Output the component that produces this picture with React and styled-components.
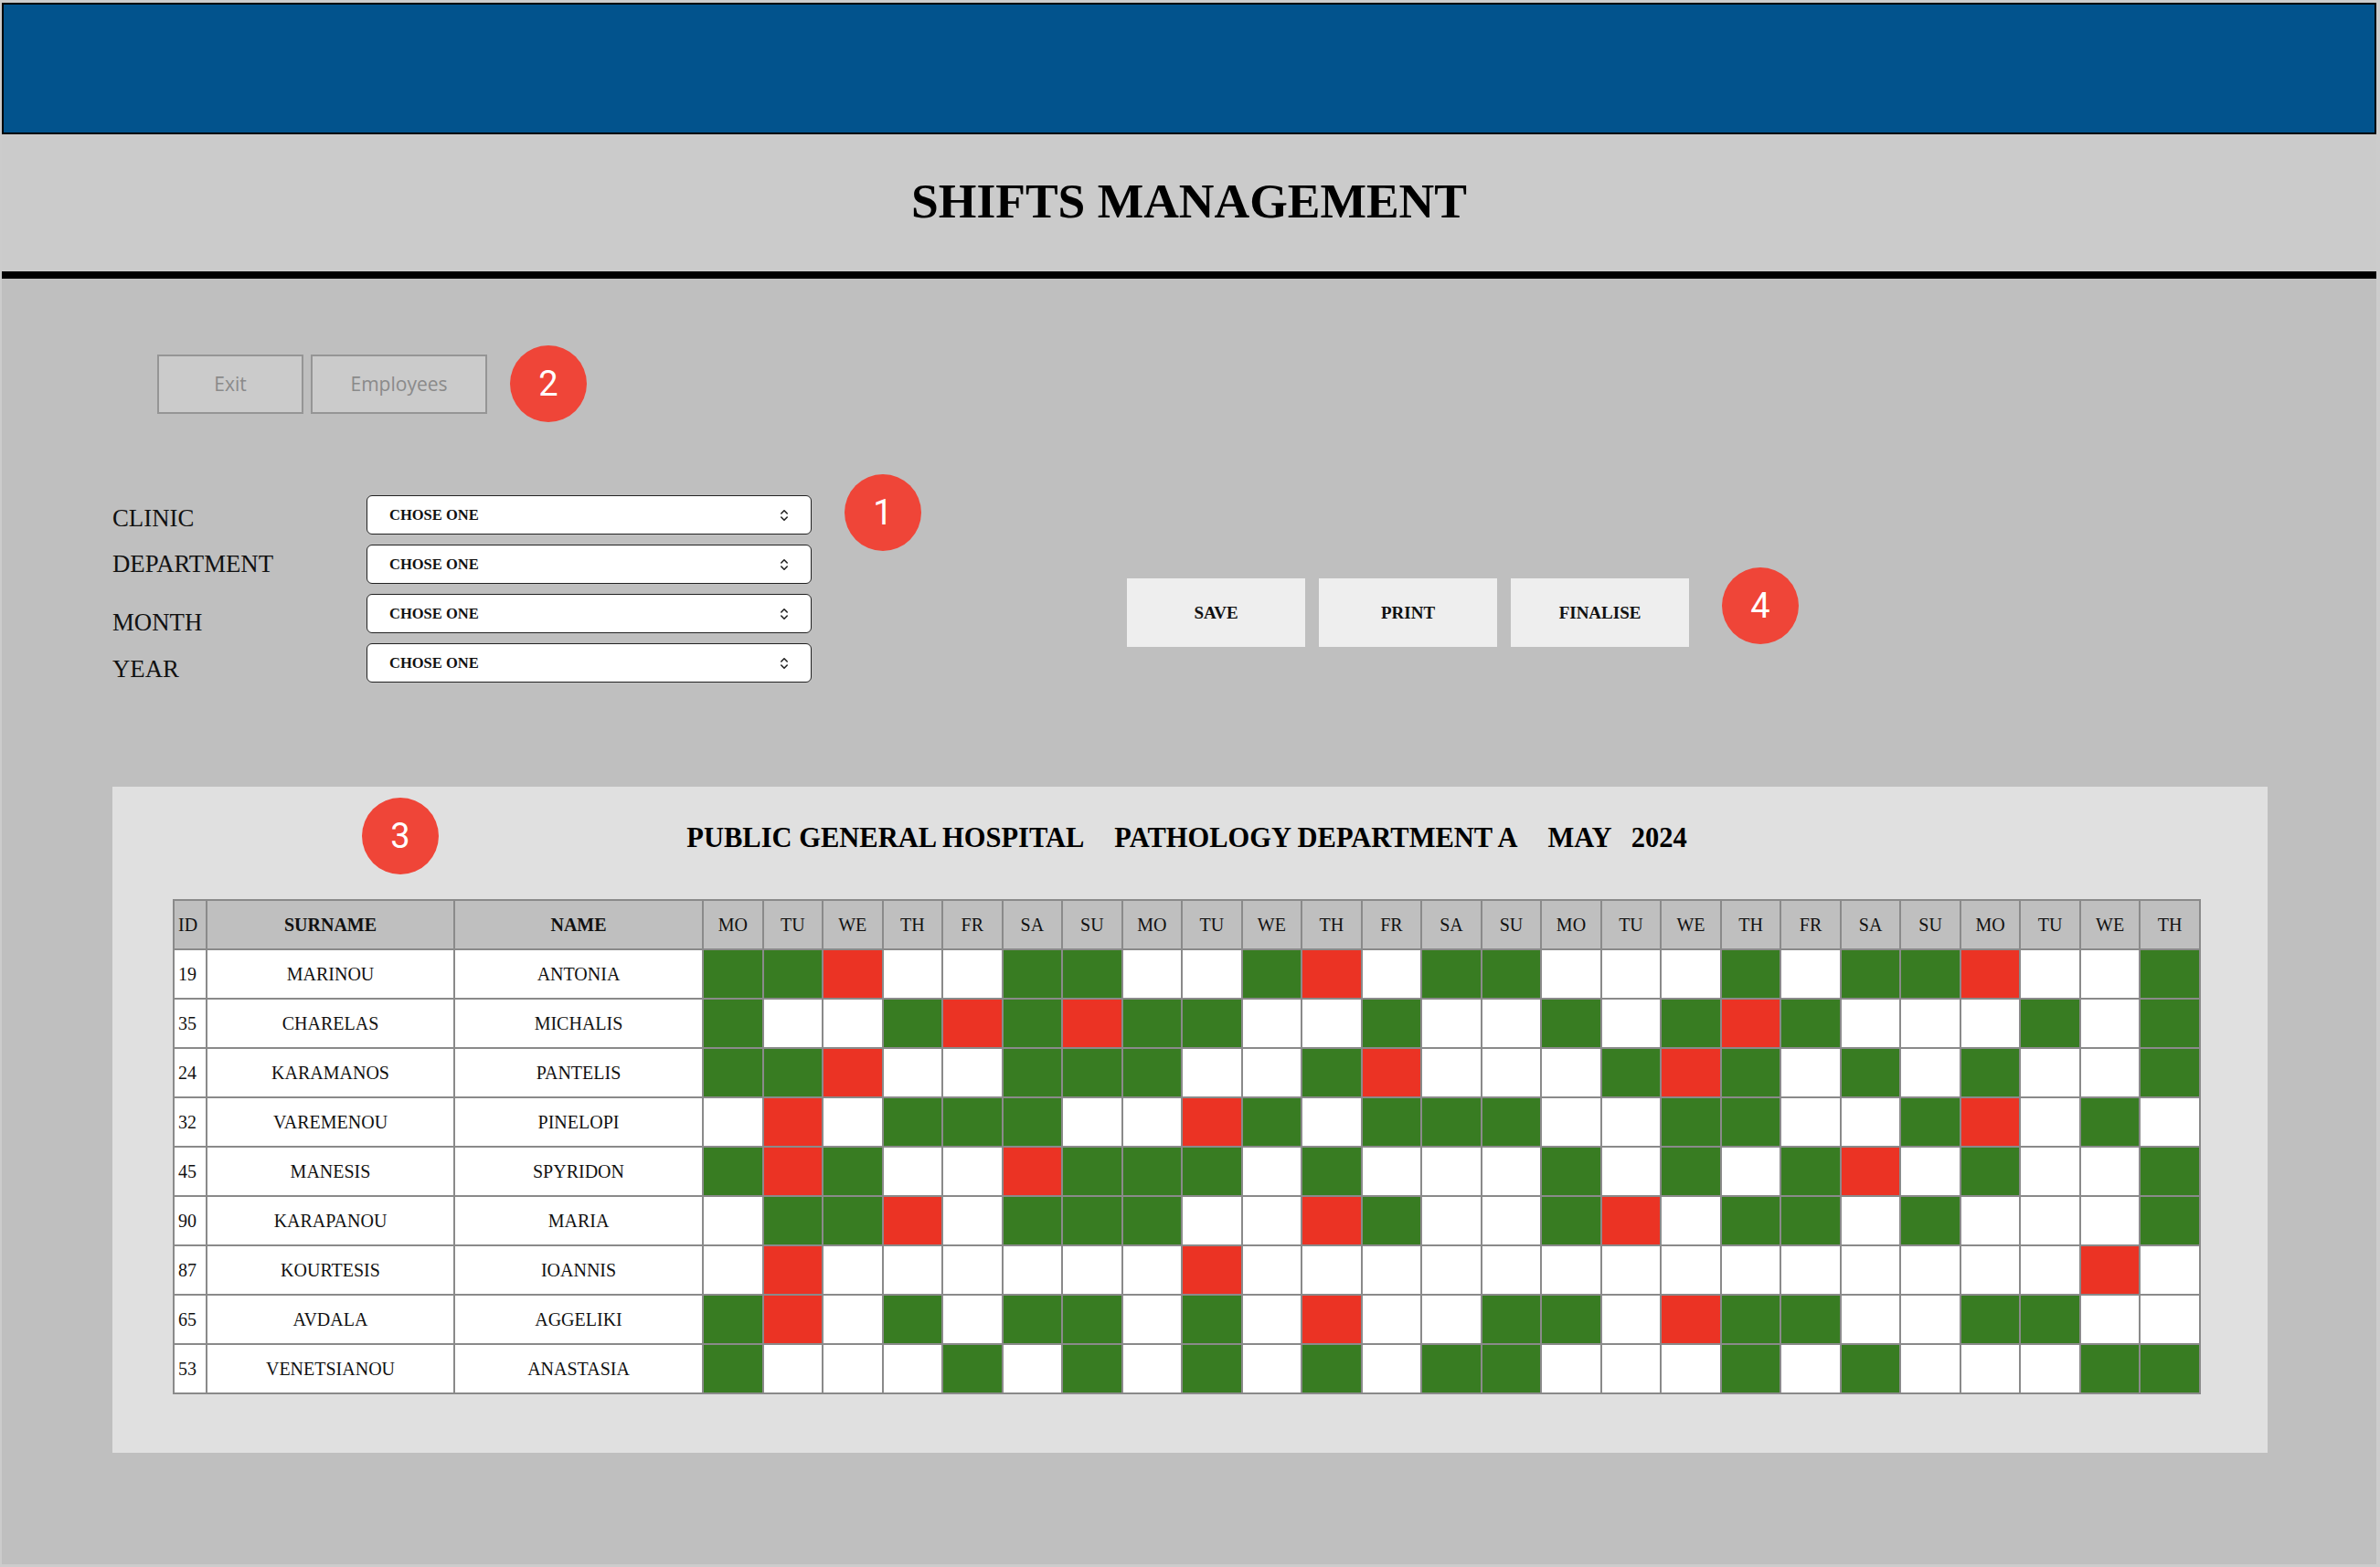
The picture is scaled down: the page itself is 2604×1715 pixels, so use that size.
import React from 'react';
import styled, { createGlobalStyle } from 'styled-components';

const GlobalStyle = createGlobalStyle`
    body{
        margin:0;
        background:#cccccc;
        font-family:"Liberation Serif","Times New Roman",serif;
    }
    *{ box-sizing:border-box; }
`

const Page = styled.div`
    margin:3px 4px 3px 2px;
    height:1709px;
    display:flex;
    flex-direction:column;
    background:#bfbfbf;
`
const TopBar = styled.div`
    height:144px;
    background:#02538d;
    border:2px solid #000;
`
const TitleBand = styled.div`
    height:158px;
    background:#cbcbcb;
    border-bottom:8px solid #000;
    display:flex;
    align-items:center;
    justify-content:center;
`
const Title = styled.h1`
    margin:0 0 4px;
    font-size:53.5px;
    font-weight:700;
    color:#000;
`
const Body = styled.div`
    flex:1;
    display:flex;
    flex-direction:column;
`
const NavRow = styled.div`
    display:flex;
    align-items:center;
    gap:8px;
    margin:73px 0 0 170px;
`
const NavButton = styled.button`
    height:65px;
    width:${p => p.w}px;
    background:#cbcbcb;
    border:2px solid #959595;
    color:#8a8a8a;
    font-family:"Open Sans","Noto Sans",sans-serif;
    font-size:21px;
    padding:0;
`
const Badge = styled.div`
    width:84px;
    height:84px;
    border-radius:50%;
    background:#ef4538;
    color:#fff;
    font-family:Roboto,"Noto Sans",sans-serif;
    font-size:38px;
    display:flex;
    align-items:center;
    justify-content:center;
    flex-shrink:0;
    margin-left:${p => p.ml || 0}px;
    margin-top:${p => p.mt || 0}px;
`
const FloatBadge = styled(Badge)`
    position:absolute;
    left:273px;
    top:12px;
`
const FormRow = styled.div`
    display:flex;
    align-items:flex-start;
    margin:80px 0 0 121px;
`
const FormGrid = styled.div`
    display:grid;
    grid-template-columns:278px 487px;
    grid-auto-rows:43px;
    row-gap:11px;
`
const Label = styled.div`
    font-size:26.8px;
    color:#111;
    line-height:43px;
    margin-top:${p => p.drop || 0}px;
`
const SelectBox = styled.div`
    display:flex;
    align-items:center;
    justify-content:space-between;
    background:#fff;
    border:1.5px solid #222;
    border-radius:6px;
    padding:0 24px;
    font-size:16.5px;
    font-weight:700;
    color:#111;
`
const Actions = styled.div`
    display:flex;
    align-items:flex-start;
    gap:15px;
    margin:91px 0 0 225px;
`
const ActionButton = styled.button`
    width:195px;
    height:75px;
    background:#eeeeee;
    border:none;
    font-family:"Liberation Serif","Times New Roman",serif;
    font-size:19px;
    font-weight:700;
    color:#111;
    padding:0;
`
const Panel = styled.div`
    position:relative;
    width:2358px;
    height:729px;
    margin:114px 0 0 121px;
    background:#e0e0e0;
    padding:38px 73px 0 66px;
`
const PanelTitle = styled.div`
    display:flex;
    justify-content:center;
    line-height:36px;
    font-size:30.5px;
    font-weight:700;
    color:#000;
    margin-bottom:49px;
`
const Part = styled.span`
    margin-left:${p => p.gap || 0}px;
`
const Table = styled.table`
    width:2219px;
    border-collapse:collapse;
    table-layout:fixed;
    background:#fff;
`
const Th = styled.th`
    height:54px;
    background:#bfbfbf;
    border:2px solid #8a8a8a;
    font-size:20px;
    font-weight:${p => (p.bold ? 700 : 400)};
    text-align:${p => (p.left ? 'left' : 'center')};
    padding:${p => (p.left ? '0 0 0 4px' : '0')};
    color:#111;
`
const Td = styled.td`
    height:54px;
    border:2px solid #8a8a8a;
    font-size:20px;
    color:#111;
    text-align:${p => (p.left ? 'left' : 'center')};
    padding:${p => (p.left ? '0 0 0 4px' : '0')};
`
const Shift = styled.td`
    height:54px;
    border:2px solid #8a8a8a;
    padding:0;
    background:${p => (p.kind === 'G' ? '#387c22' : p.kind === 'R' ? '#eb3324' : '#fff')};
`

const UpDown = () => (
    <svg width="10" height="14" viewBox="0 0 10 14" fill="none" stroke="#222" strokeWidth="1.6" strokeLinecap="round" strokeLinejoin="round">
        <path d="M1.8 5 L5 1.8 L8.2 5" />
        <path d="M1.8 9 L5 12.2 L8.2 9" />
    </svg>
)

const fields = [
    { label: 'CLINIC', drop: 4 },
    { label: 'DEPARTMENT', drop: 0 },
    { label: 'MONTH', drop: 10 },
    { label: 'YEAR', drop: 7 },
];

const week = ['MO', 'TU', 'WE', 'TH', 'FR', 'SA', 'SU'];
const days = [...week, ...week, ...week, 'MO', 'TU', 'WE', 'TH'];

// G = on shift, R = off / leave, W = empty
const staff = [
    { id: 19, surname: 'MARINOU', name: 'ANTONIA', shifts: 'GGRWWGGWWGRWGGWWWGWGGRWWG' },
    { id: 35, surname: 'CHARELAS', name: 'MICHALIS', shifts: 'GWWGRGRGGWWGWWGWGRGWWWGWG' },
    { id: 24, surname: 'KARAMANOS', name: 'PANTELIS', shifts: 'GGRWWGGGWWGRWWWGRGWGWGWWG' },
    { id: 32, surname: 'VAREMENOU', name: 'PINELOPI', shifts: 'WRWGGGWWRGWGGGWWGGWWGRWGW' },
    { id: 45, surname: 'MANESIS', name: 'SPYRIDON', shifts: 'GRGWWRGGGWGWWWGWGWGRWGWWG' },
    { id: 90, surname: 'KARAPANOU', name: 'MARIA', shifts: 'WGGRWGGGWWRGWWGRWGGWGWWWG' },
    { id: 87, surname: 'KOURTESIS', name: 'IOANNIS', shifts: 'WRWWWWWWRWWWWWWWWWWWWWWRW' },
    { id: 65, surname: 'AVDALA', name: 'AGGELIKI', shifts: 'GRWGWGGWGWRWWGGWRGGWWGGWW' },
    { id: 53, surname: 'VENETSIANOU', name: 'ANASTASIA', shifts: 'GWWWGWGWGWGWGGWWWGWGWWWGG' },
];

const App = () => {
  return (
    <>
      <GlobalStyle />
      <Page>
        <TopBar />
        <TitleBand>
            <Title>SHIFTS MANAGEMENT</Title>
        </TitleBand>
        <Body>
            <NavRow>
                <NavButton w={160}>Exit</NavButton>
                <NavButton w={193}>Employees</NavButton>
                <Badge ml={17}>2</Badge>
            </NavRow>

            <FormRow>
                <FormGrid>
                    {fields.map(f => (
                        <React.Fragment key={f.label}>
                            <Label drop={f.drop}>{f.label}</Label>
                            <SelectBox>
                                <span>CHOSE ONE</span>
                                <UpDown />
                            </SelectBox>
                        </React.Fragment>
                    ))}
                </FormGrid>
                <Badge ml={36} mt={-23}>1</Badge>
                <Actions>
                    <ActionButton>SAVE</ActionButton>
                    <ActionButton>PRINT</ActionButton>
                    <ActionButton>FINALISE</ActionButton>
                    <Badge ml={21} mt={-12}>4</Badge>
                </Actions>
            </FormRow>

            <Panel>
                <FloatBadge>3</FloatBadge>
                <PanelTitle>
                    <Part>PUBLIC GENERAL HOSPITAL</Part>
                    <Part gap={33}>PATHOLOGY DEPARTMENT A</Part>
                    <Part gap={33}>MAY</Part>
                    <Part gap={21}>2024</Part>
                </PanelTitle>
                <Table>
                    <colgroup>
                        <col style={{ width: 36 }} />
                        <col style={{ width: 271 }} />
                        <col style={{ width: 272 }} />
                        {days.map((d, i) => <col key={i} />)}
                    </colgroup>
                    <thead>
                        <tr>
                            <Th left>ID</Th>
                            <Th bold>SURNAME</Th>
                            <Th bold>NAME</Th>
                            {days.map((d, i) => <Th key={i}>{d}</Th>)}
                        </tr>
                    </thead>
                    <tbody>
                        {staff.map(s => (
                            <tr key={s.id}>
                                <Td left>{s.id}</Td>
                                <Td>{s.surname}</Td>
                                <Td>{s.name}</Td>
                                {s.shifts.split('').map((k, i) => <Shift key={i} kind={k} />)}
                            </tr>
                        ))}
                    </tbody>
                </Table>
            </Panel>
        </Body>
      </Page>
    </>
  );
};

export default App;
